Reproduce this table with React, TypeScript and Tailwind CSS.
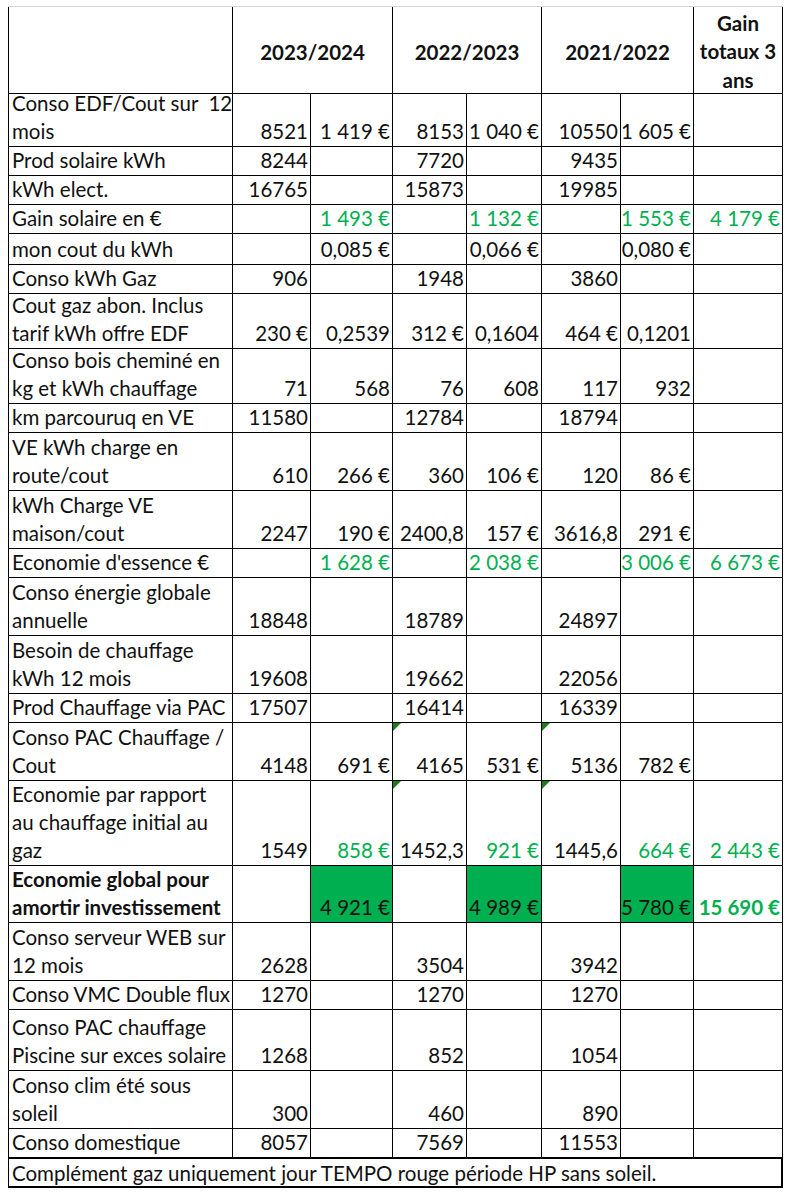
type Cell = { v: string; green?: boolean; fill?: boolean; bold?: boolean; tri?: boolean };

interface Row {
  label: string[];
  h: string;
  bold?: boolean;
  cells: Cell[];
}

const c = (v: string, o: Partial<Cell> = {}): Cell => ({ v, ...o });
const e = c("");
const g = (v: string) => c(v, { green: true });

const rows: Row[] = [
  { label: ["Conso EDF/Cout sur\u00a0 12", "mois"], h: "h-[52px]", cells: [c("8521"), c("1 419 €"), c("8153"), c("1 040 €"), c("10550"), c("1 605 €"), e] },
  { label: ["Prod solaire kWh"], h: "h-[28px]", cells: [c("8244"), e, c("7720"), e, c("9435"), e, e] },
  { label: ["kWh elect."], h: "h-[28px]", cells: [c("16765"), e, c("15873"), e, c("19985"), e, e] },
  { label: ["Gain solaire en €"], h: "h-[28px]", cells: [e, g("1 493 €"), e, g("1 132 €"), e, g("1 553 €"), g("4 179 €")] },
  { label: ["mon cout du kWh"], h: "h-[30px]", cells: [e, c("0,085 €"), e, c("0,066 €"), e, c("0,080 €"), e] },
  { label: ["Conso kWh Gaz"], h: "h-[28px]", cells: [c("906"), e, c("1948"), e, c("3860"), e, e] },
  { label: ["Cout gaz abon. Inclus", "tarif kWh offre EDF"], h: "h-[54px]", cells: [c("230 €"), c("0,2539"), c("312 €"), c("0,1604"), c("464 €"), c("0,1201"), e] },
  { label: ["Conso bois cheminé en", "kg et kWh chauffage"], h: "h-[54px]", cells: [c("71"), c("568"), c("76"), c("608"), c("117"), c("932"), e] },
  { label: ["km parcouruq en VE"], h: "h-[28px]", cells: [c("11580"), e, c("12784"), e, c("18794"), e, e] },
  { label: ["VE kWh charge en", "route/cout"], h: "h-[57px]", cells: [c("610"), c("266 €"), c("360"), c("106 €"), c("120"), c("86 €"), e] },
  { label: ["kWh Charge VE", "maison/cout"], h: "h-[57px]", cells: [c("2247"), c("190 €"), c("2400,8"), c("157 €"), c("3616,8"), c("291 €"), e] },
  { label: ["Economie d'essence €"], h: "h-[28px]", cells: [e, g("1 628 €"), e, g("2 038 €"), e, g("3 006 €"), g("6 673 €")] },
  { label: ["Conso énergie globale", "annuelle"], h: "h-[57px]", cells: [c("18848"), e, c("18789"), e, c("24897"), e, e] },
  { label: ["Besoin de chauffage", "kWh 12 mois"], h: "h-[57px]", cells: [c("19608"), e, c("19662"), e, c("22056"), e, e] },
  { label: ["Prod Chauffage via PAC"], h: "h-[28px]", cells: [c("17507"), e, c("16414"), e, c("16339"), e, e] },
  { label: ["Conso PAC Chauffage /", "Cout"], h: "h-[57px]", cells: [c("4148"), c("691 €"), c("4165", { tri: true }), c("531 €"), c("5136", { tri: true }), c("782 €"), e] },
  { label: ["Economie par rapport", "au chauffage initial au", "gaz"], h: "h-[84px]", cells: [c("1549"), g("858 €"), c("1452,3", { tri: true }), g("921 €"), c("1445,6", { tri: true }), g("664 €"), g("2 443 €")] },
  { label: ["Economie global pour", "amortir investissement"], h: "h-[56px]", bold: true, cells: [e, c("4 921 €", { fill: true }), e, c("4 989 €", { fill: true }), e, c("5 780 €", { fill: true }), c("15 690 €", { green: true, bold: true })] },
  { label: ["Conso serveur WEB sur", "12 mois"], h: "h-[57px]", cells: [c("2628"), e, c("3504"), e, c("3942"), e, e] },
  { label: ["Conso VMC Double flux"], h: "h-[28px]", cells: [c("1270"), e, c("1270"), e, c("1270"), e, e] },
  { label: ["Conso PAC chauffage", "Piscine sur exces solaire"], h: "h-[60px]", cells: [c("1268"), e, c("852"), e, c("1054"), e, e] },
  { label: ["Conso clim été sous", "soleil"], h: "h-[57px]", cells: [c("300"), e, c("460"), e, c("890"), e, e] },
  { label: ["Conso domestique"], h: "h-[28px]", cells: [c("8057"), e, c("7569"), e, c("11553"), e, e] },
];

export default function App() {
  return (
    <div className="min-h-screen bg-white pt-[6px] pl-[8px] text-[20.5px] leading-[28px] text-[#111] [font-family:Lato,'Liberation_Sans',sans-serif]">
      <div className="grid w-[775px] grid-cols-[223px_77px_81px_73px_74px_78px_72px_88px] gap-px border-t border-[#d4d4d4] bg-black px-px">
        {/* header */}
        <div className="h-[86px] bg-white" />
        {["2023/2024", "2022/2023", "2021/2022"].map(y => (
          <div key={y} className="col-span-2 flex h-[86px] items-center justify-center bg-white pt-[3px] font-bold">{y}</div>
        ))}
        <div className="flex h-[86px] flex-col items-center justify-center bg-white pt-[3px] text-center font-bold leading-[28.5px]">
          <span>Gain</span>
          <span>totaux 3</span>
          <span>ans</span>
        </div>

        {rows.map((r, i) => (
          <div key={i} className="contents">
            <div className={`${r.h} flex flex-col justify-end bg-white px-[3px] pb-px ${r.bold ? "font-bold" : ""}`}>
              {r.label.map((l, j) => <span key={j} className="whitespace-pre">{l}</span>)}
            </div>
            {r.cells.map((cell, j) => (
              <div
                key={j}
                className={`${r.h} relative flex items-end justify-end whitespace-nowrap pr-[2px] pb-px ${cell.fill ? "bg-[#00b050]" : "bg-white"} ${cell.green ? "text-[#00b050]" : ""} ${cell.bold ? "font-bold" : ""}`}
              >
                {cell.tri && <div className="absolute left-0 top-0 h-[8px] w-[8px] bg-[#1a7f1a] [clip-path:polygon(0_0,100%_0,0_100%)]" />}
                {cell.v}
              </div>
            ))}
          </div>
        ))}
      </div>
      <div className="flex h-[31px] w-[775px] items-center border-t-2 border-r-2 border-b-2 border-l border-black px-[3px]">
        Complément gaz uniquement jour TEMPO rouge période HP sans soleil.
      </div>
    </div>
  );
}
